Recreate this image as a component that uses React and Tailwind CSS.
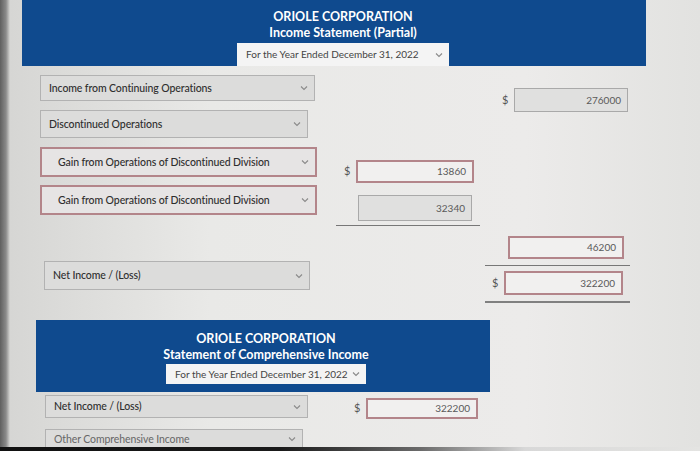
import React from "react";

function Chevron() {
  return (
    <svg width="8" height="6" viewBox="0 0 8 6" className="shrink-0">
      <path d="M1 1.5 L4 4.5 L7 1.5" fill="none" stroke="#8a8a8a" strokeWidth="1.1" />
    </svg>
  );
}

function Select({ label, w, h, red, indent, light }) {
  return (
    <div
      className={`flex items-center justify-between pr-[6px] ${indent ? "pl-[16px]" : "pl-[8px]"} ${
        red ? "border-2 border-[#b3858a] bg-[#e6e4e4]" : "border border-[#b2b2b2] bg-[#dcdcdb]"
      }`}
      style={{ width: w, height: h }}
    >
      <span className={`text-[10.5px] leading-none tracking-[-0.1px] ${light ? "text-[#666] font-normal" : "text-[#2e2e2e] font-medium"}`}>
        {label}
      </span>
      <Chevron />
    </div>
  );
}

function Input({ value, w, h, red }) {
  return (
    <div
      className={`flex items-center justify-end pr-[6px] text-[10px] text-[#5a5a5a] ${
        red ? "border-2 border-[#b3858a] bg-[#f1f0ef]" : "border border-[#a9a9a9] bg-[#e0e0df]"
      }`}
      style={{ width: w, height: h }}
    >
      {value}
    </div>
  );
}

function Dollar() {
  return <span className="text-[11px] text-[#555] w-[12px] shrink-0">$</span>;
}

function Banner({ title, subtitle, w, h, ddW, ddH, shift, top, gap }) {
  return (
    <div className="bg-[#0f4a8e] flex flex-col items-center" style={{ width: w, height: h, paddingLeft: shift, paddingTop: top }}>
      <div className="text-white font-bold text-[12.5px] leading-[16px]">ORIOLE CORPORATION</div>
      <div className="text-white font-bold text-[12.5px] leading-[16px]">{title}</div>
      <div className="bg-[#f4f4f4] flex items-center justify-between pl-[9px] pr-[6px]" style={{ width: ddW, height: ddH, marginTop: gap }}>
        <span className="text-[10px] text-[#444]">{subtitle}</span>
        <Chevron />
      </div>
    </div>
  );
}

export default function App() {
  return (
    <div className="w-[700px] h-[451px] overflow-hidden relative font-['Lato','Noto_Sans',sans-serif] bg-[linear-gradient(to_right,#5f5f5f_0px,#8a8a8a_6px,#d6d6d4_10px,#e9e9e7_30%,#ecebea_75%,#e2e2e0_100%)]">
      <div className="flex flex-col">
        {/* Banner 1 */}
        <div className="ml-[22px]">
          <Banner
            title="Income Statement (Partial)"
            subtitle="For the Year Ended December 31, 2022"
            w={624}
            h={66}
            ddW={212}
            ddH={23}
            shift={18}
            top={9}
            gap={2}
          />
        </div>

        {/* Row 1 */}
        <div className="flex items-start h-[35px] mt-[9px]">
          <div className="w-[336px] pl-[40px]">
            <Select label="Income from Continuing Operations" w={275} h={26} />
          </div>
          <div className="w-[166px]" />
          <div className="flex items-center mt-[13px]">
            <Dollar />
            <Input value="276000" w={114} h={24} />
          </div>
        </div>

        {/* Row 2 */}
        <div className="flex items-start h-[37px]">
          <div className="w-[336px] pl-[40px]">
            <Select label="Discontinued Operations" w={268} h={28} />
          </div>
        </div>

        {/* Row 3 */}
        <div className="flex items-start h-[38px]">
          <div className="w-[344px] pl-[40px]">
            <Select label="Gain from Operations of Discontinued Division" w={277} h={30} red indent />
          </div>
          <div className="flex items-center mt-[13px]">
            <Dollar />
            <Input value="13860" w={118} h={23} red />
          </div>
        </div>

        {/* Row 4 */}
        <div className="flex items-start h-[51px]">
          <div className="w-[336px] pl-[40px]">
            <Select label="Gain from Operations of Discontinued Division" w={277} h={30} red indent />
          </div>
          <div className="flex flex-col mt-[10px]">
            <div className="pl-[22px]">
              <Input value="32340" w={114} h={26} />
            </div>
            <div className="mt-[4px] w-[144px] h-px bg-[#777]" />
          </div>
        </div>

        {/* Row 5 + Net income */}
        <div className="flex items-start h-[84px]">
          <div className="w-[485px] pl-[44px] pt-[25px]">
            <Select label="Net Income / (Loss)" w={266} h={29} />
          </div>
          <div className="flex flex-col w-[145px]">
            <div className="pl-[23px]">
              <Input value="46200" w={116} h={23} red />
            </div>
            <div className="mt-[6px] h-px bg-[#777]" />
            <div className="mt-[5px] flex items-center pl-[7px]">
              <Dollar />
              <Input value="322200" w={119} h={24} red />
            </div>
            <div className="mt-[6px] h-[2px] bg-[#808080]" />
          </div>
        </div>

        {/* Banner 2 */}
        <div className="ml-[36px]">
          <Banner
            title="Statement of Comprehensive Income"
            subtitle="For the Year Ended December 31, 2022"
            w={454}
            h={72}
            ddW={200}
            ddH={20}
            shift={6}
            top={11}
            gap={1}
          />
        </div>

        {/* Row 6 */}
        <div className="flex items-start h-[34px] mt-[3px]">
          <div className="w-[354px] pl-[45px]">
            <Select label="Net Income / (Loss)" w={263} h={23} />
          </div>
          <div className="flex items-center mt-[3px]">
            <Dollar />
            <Input value="322200" w={112} h={21} red />
          </div>
        </div>

        {/* Row 7 */}
        <div className="flex items-start">
          <div className="pl-[45px]">
            <Select label="Other Comprehensive Income" w={258} h={20} light />
          </div>
        </div>
      </div>

      {/* bottom bezel */}
      <div className="absolute left-0 bottom-0 w-[700px] h-[4px] bg-[linear-gradient(to_right,#111_0%,#1a1a1a_40%,#6a6a6a_60%,#d8d8d8_75%,#e4e4e2_100%)]" />
    </div>
  );
}
